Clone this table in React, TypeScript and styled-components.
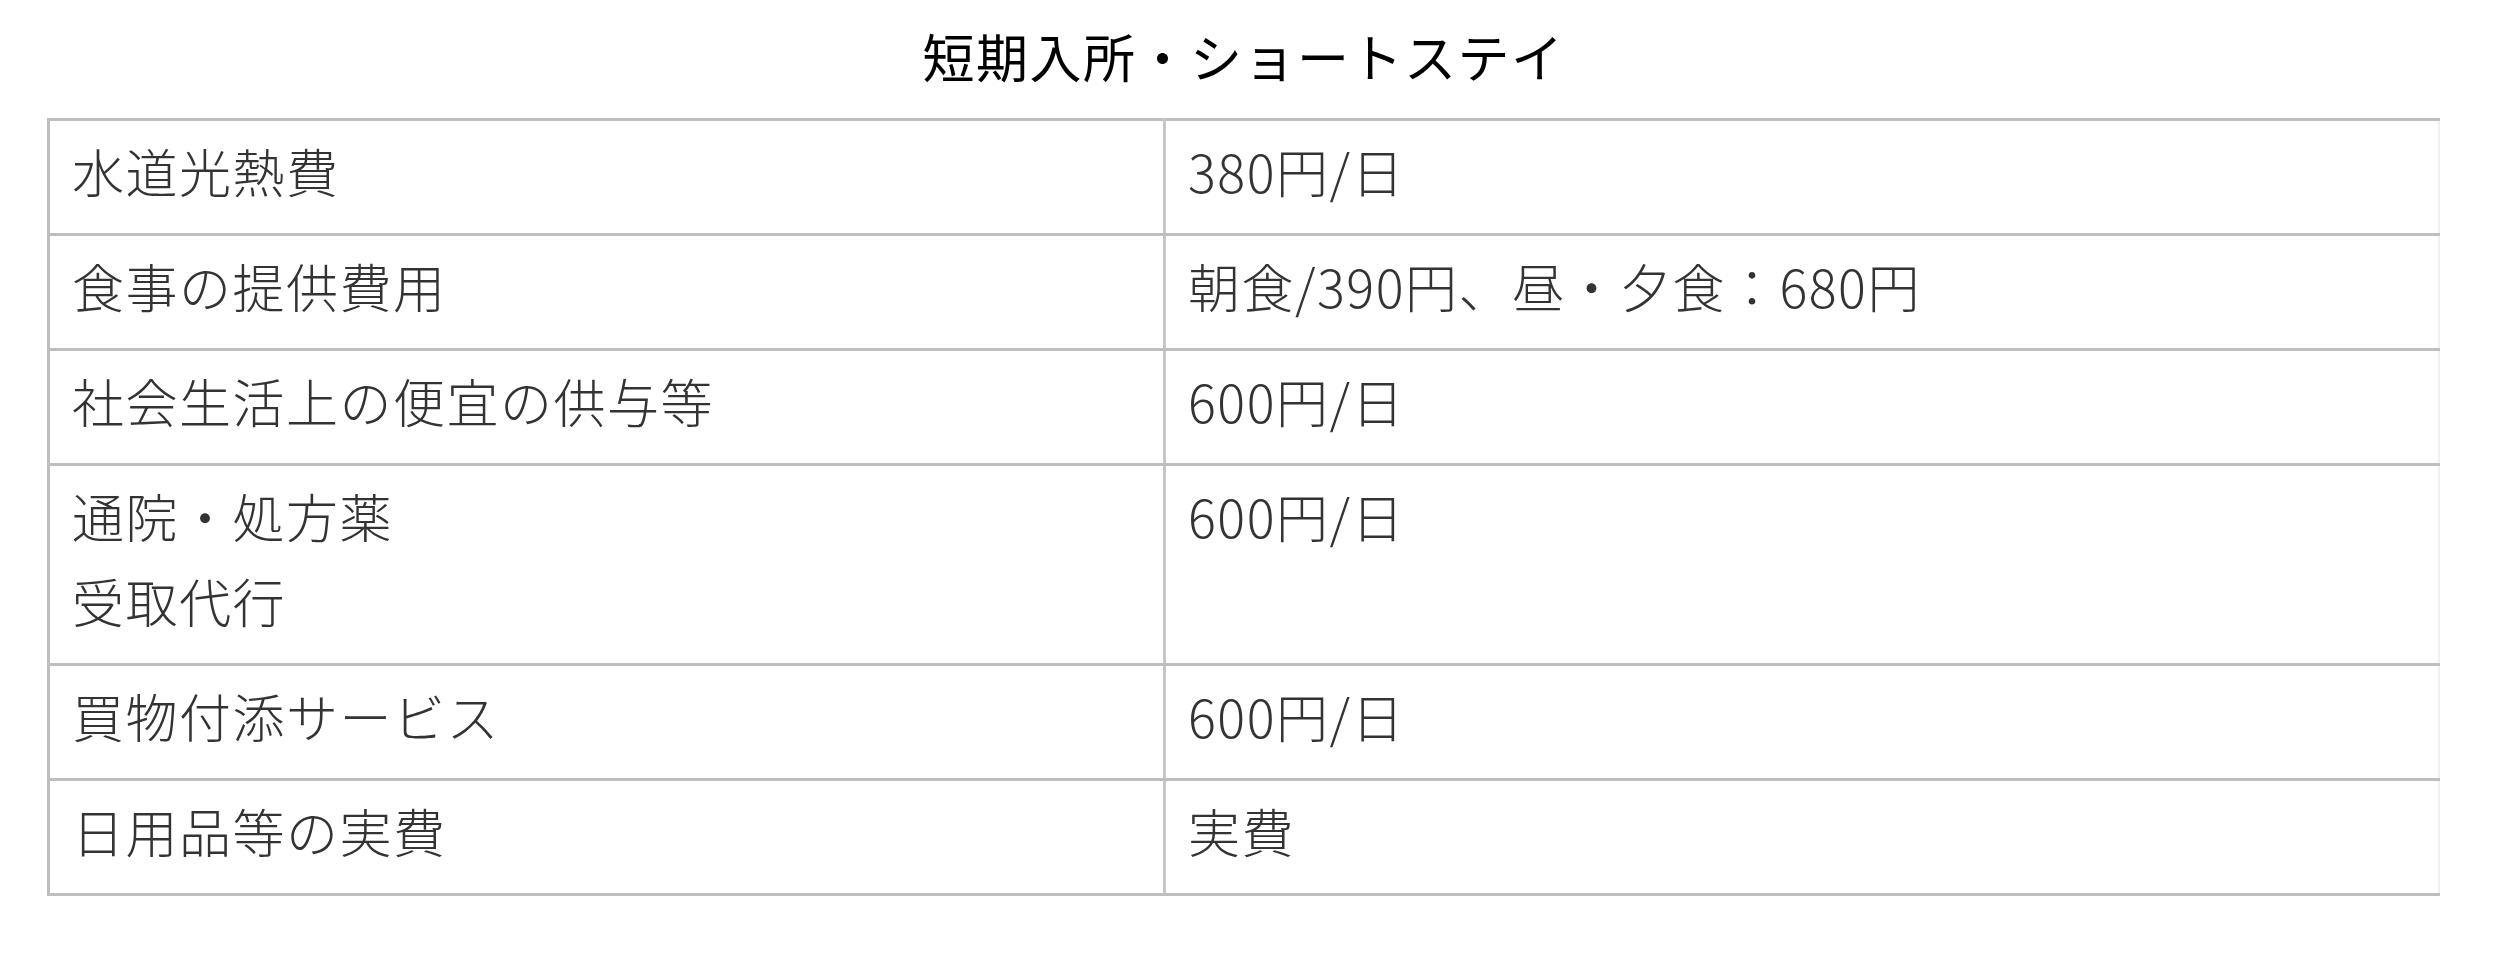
import React from 'react';
import styled, { createGlobalStyle } from 'styled-components';

const GlobalStyle = createGlobalStyle`
  html, body {
    margin: 0;
    padding: 0;
    background: #fff;
  }
  body {
    font-family: "Noto Sans CJK JP", "Noto Sans", sans-serif;
    color: #333;
  }
`;

const rows: { label: string[]; price: string }[] = [
  { label: ['水道光熱費'], price: '380円/日' },
  { label: ['食事の提供費用'], price: '朝食/390円、昼・夕食：680円' },
  { label: ['社会生活上の便宜の供与等'], price: '600円/日' },
  { label: ['通院・処方薬', '受取代行'], price: '600円/日' },
  { label: ['買物付添サービス'], price: '600円/日' },
  { label: ['日用品等の実費'], price: '実費' },
];

const App = () => {
  return (
    <>
      <GlobalStyle />
      <Section>
        <Title>短期入所・ショートステイ</Title>
        <FeeTable>
          <colgroup>
            <col style={{ width: '1116px' }} />
            <col />
          </colgroup>
          <tbody>
            {rows.map((row) => (
              <tr key={row.label.join('')}>
                <Cell>
                  {row.label.map((line) => (
                    <Line key={line}>{line}</Line>
                  ))}
                </Cell>
                <Cell $last>{row.price}</Cell>
              </tr>
            ))}
          </tbody>
        </FeeTable>
      </Section>
    </>
  );
};

const Section = styled.section`
  width: 2393px;
  margin-left: 47px;
  padding-top: 18px;
`;

const Title = styled.h2`
  margin: 0 0 25px;
  text-align: center;
  font-size: 52px;
  font-weight: 400;
  line-height: 75px;
  color: #000;
  letter-spacing: 1.5px;
`;

const FeeTable = styled.table`
  width: 100%;
  border-collapse: collapse;
  table-layout: fixed;
`;

const Cell = styled.td<{ $last?: boolean }>`
  vertical-align: top;
  padding: 7px 22px 20px 22px;
  font-size: 52px;
  line-height: 85px;
  font-weight: 300;
  letter-spacing: 1.5px;
  color: #333;
  border-top: 3px solid #bebebe;
  border-bottom: 3px solid #bebebe;
  border-left: 3px solid ${(p) => (p.$last ? '#c6c6c6' : '#bebebe')};
  border-right: ${(p) => (p.$last ? '2px solid #f0f0f0' : '3px solid #c6c6c6')};
`;

const Line = styled.div`
  display: block;
`;

export default App;
